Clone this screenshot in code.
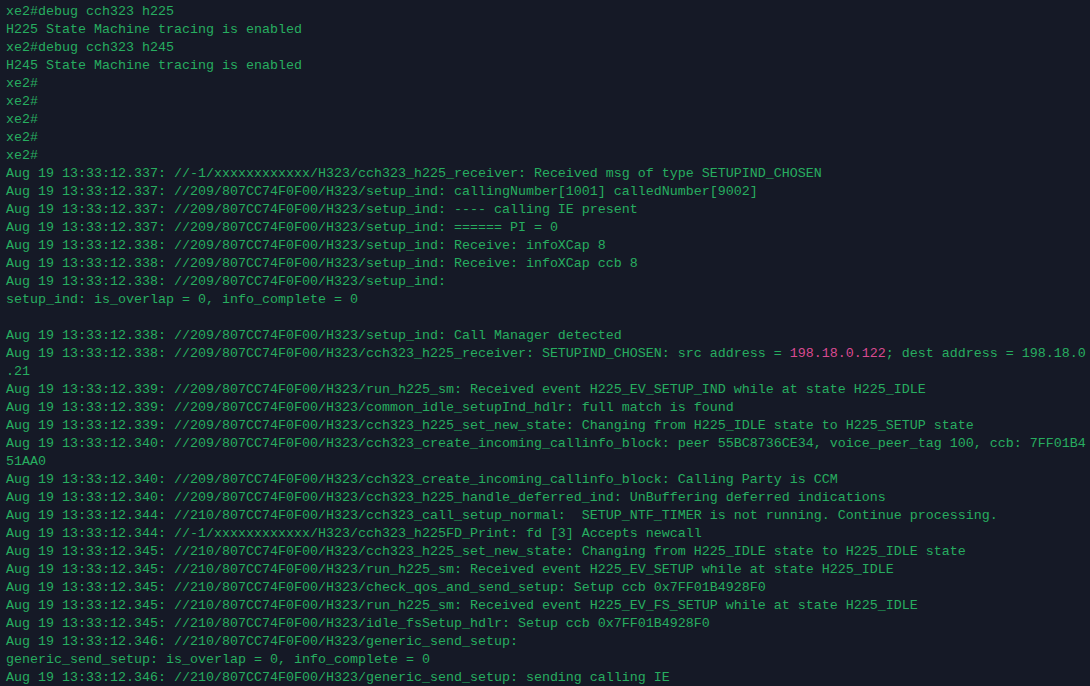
const lines: string[] = [
  'xe2#debug cch323 h225',
  'H225 State Machine tracing is enabled',
  'xe2#debug cch323 h245',
  'H245 State Machine tracing is enabled',
  'xe2#',
  'xe2#',
  'xe2#',
  'xe2#',
  'xe2#',
  'Aug 19 13:33:12.337: //-1/xxxxxxxxxxxx/H323/cch323_h225_receiver: Received msg of type SETUPIND_CHOSEN',
  'Aug 19 13:33:12.337: //209/807CC74F0F00/H323/setup_ind: callingNumber[1001] calledNumber[9002]',
  'Aug 19 13:33:12.337: //209/807CC74F0F00/H323/setup_ind: ---- calling IE present',
  'Aug 19 13:33:12.337: //209/807CC74F0F00/H323/setup_ind: ====== PI = 0',
  'Aug 19 13:33:12.338: //209/807CC74F0F00/H323/setup_ind: Receive: infoXCap 8',
  'Aug 19 13:33:12.338: //209/807CC74F0F00/H323/setup_ind: Receive: infoXCap ccb 8',
  'Aug 19 13:33:12.338: //209/807CC74F0F00/H323/setup_ind: ',
  'setup_ind: is_overlap = 0, info_complete = 0',
  '',
  'Aug 19 13:33:12.338: //209/807CC74F0F00/H323/setup_ind: Call Manager detected',
  'IP_LINE',
  '.21',
  'Aug 19 13:33:12.339: //209/807CC74F0F00/H323/run_h225_sm: Received event H225_EV_SETUP_IND while at state H225_IDLE',
  'Aug 19 13:33:12.339: //209/807CC74F0F00/H323/common_idle_setupInd_hdlr: full match is found',
  'Aug 19 13:33:12.339: //209/807CC74F0F00/H323/cch323_h225_set_new_state: Changing from H225_IDLE state to H225_SETUP state',
  'Aug 19 13:33:12.340: //209/807CC74F0F00/H323/cch323_create_incoming_callinfo_block: peer 55BC8736CE34, voice_peer_tag 100, ccb: 7FF01B4',
  '51AA0',
  'Aug 19 13:33:12.340: //209/807CC74F0F00/H323/cch323_create_incoming_callinfo_block: Calling Party is CCM',
  'Aug 19 13:33:12.340: //209/807CC74F0F00/H323/cch323_h225_handle_deferred_ind: UnBuffering deferred indications',
  'Aug 19 13:33:12.344: //210/807CC74F0F00/H323/cch323_call_setup_normal:  SETUP_NTF_TIMER is not running. Continue processing.',
  'Aug 19 13:33:12.344: //-1/xxxxxxxxxxxx/H323/cch323_h225FD_Print: fd [3] Accepts newcall',
  'Aug 19 13:33:12.345: //210/807CC74F0F00/H323/cch323_h225_set_new_state: Changing from H225_IDLE state to H225_IDLE state',
  'Aug 19 13:33:12.345: //210/807CC74F0F00/H323/run_h225_sm: Received event H225_EV_SETUP while at state H225_IDLE',
  'Aug 19 13:33:12.345: //210/807CC74F0F00/H323/check_qos_and_send_setup: Setup ccb 0x7FF01B4928F0',
  'Aug 19 13:33:12.345: //210/807CC74F0F00/H323/run_h225_sm: Received event H225_EV_FS_SETUP while at state H225_IDLE',
  'Aug 19 13:33:12.345: //210/807CC74F0F00/H323/idle_fsSetup_hdlr: Setup ccb 0x7FF01B4928F0',
  'Aug 19 13:33:12.346: //210/807CC74F0F00/H323/generic_send_setup: ',
  'generic_send_setup: is_overlap = 0, info_complete = 0',
  'Aug 19 13:33:12.346: //210/807CC74F0F00/H323/generic_send_setup: sending calling IE',
];

export default function App() {
  return (
    <div className="h-[686px] w-[1090px] overflow-hidden bg-[#151926] pl-[6px] pt-[3px] font-['Liberation_Mono','DejaVu_Sans_Mono',monospace] text-[13.33px] leading-[18px] text-[#27ad60]">
      {lines.map((line, i) =>
        line === 'IP_LINE' ? (
          <div key={i} className="h-[18px] whitespace-pre">
            {'Aug 19 13:33:12.338: //209/807CC74F0F00/H323/cch323_h225_receiver: SETUPIND_CHOSEN: src address = '}
            <span className="text-[#d94a90]">198.18.0.122</span>
            {'; dest address = 198.18.0'}
          </div>
        ) : (
          <div key={i} className="h-[18px] whitespace-pre">
            {line}
          </div>
        )
      )}
    </div>
  );
}
